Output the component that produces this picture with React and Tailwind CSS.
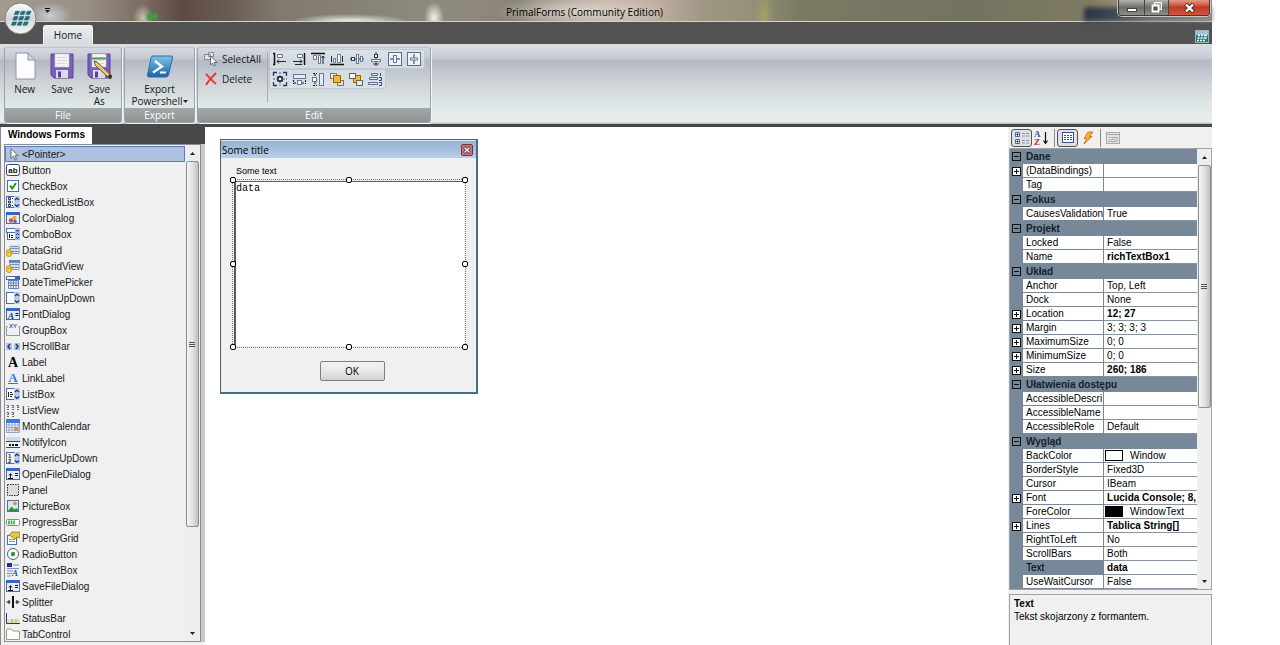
import React from "react";

const BLUE = "#4a6fa5";
const NAVY = "#1f3864";

// small pieces shared by the toolbox icons
const Frame = ({ x = 1, y = 1, w = 12, h = 12, fill = "#fff" }) => (
  <rect x={x + 0.5} y={y + 0.5} width={w - 1} height={h - 1} fill={fill} stroke={BLUE} />
);

const Dialog = ({ children }) => (
  <>
    <Frame x={0} w={14} fill="#e4ecf8" />
    <rect x="0" y="1" width="14" height="3" fill="#3565c8" />
    {children}
  </>
);

const Spin = () => (
  <>
    <rect x="8" y="1" width="6" height="12" fill="#b8cdf0" />
    <path d="M9 5l2-2 2 2M9 9.500l2 2 2-2" fill="none" stroke={NAVY} strokeWidth="1.200" />
  </>
);

const Grid = () => <path d="M4 3.500h9v7h-9zM4 5.500h9M4 8.500h9M7 3v8M10 3v8" fill="#fff" stroke="#7d94b8" />;

const Cylinder = () => (
  <path d="M0.500 8c0-2 5-2 5 0v4c0 2-5 2-5 0zM0.500 8c0 1.500 5 1.500 5 0" fill="#f5c542" stroke="#b8860b" strokeWidth="0.700" />
);

const FileDialog = () => (
  <Dialog>
    <path d="M2 11.500h5M4.500 11V7M3 8.500l1.500-2 1.500 2M9 6.500h3M9 8.500h3" fill="none" stroke="#111" />
  </Dialog>
);

const toolIcons = {
  "<Pointer>": <path d="M5 1.500v10l2.300-2.200 1.700 3.700 1.500-.7-1.600-3.600h3.100z" fill="#fff" stroke="#4d5f80" strokeWidth="0.900" />,
  Button: (
    <>
      <rect x="0.500" y="1.500" width="13" height="11" rx="2" fill="#fff" stroke="#2c4770" />
      <text x="7" y="10" textAnchor="middle" fontSize="8" fontWeight="bold" fill="#111">ab</text>
    </>
  ),
  CheckBox: (
    <>
      <Frame />
      <path d="M4 6.500l2.200 3L10 4" fill="none" stroke="#1d9a1d" strokeWidth="2" />
    </>
  ),
  CheckedListBox: (
    <>
      <Frame x={0} w={14} />
      <path d="M2.500 2.500h2v2h-2zM2.500 6h2v2h-2zM2.500 9.500h2v2h-2zM6 3.500h1M6 7h1M6 10.500h1" fill="none" stroke={NAVY} />
      <Spin />
    </>
  ),
  ColorDialog: (
    <Dialog>
      <circle cx="5" cy="9.500" r="2.200" fill="#e04a3a" />
      <circle cx="8.500" cy="7" r="2.200" fill="#f0a030" />
      <circle cx="9" cy="10.500" r="1.800" fill="#3f6fd8" />
    </Dialog>
  ),
  ComboBox: (
    <>
      <Frame x={0} y={1} w={14} h={5} />
      <Frame x={1} y={5} w={12} h={8} />
      <path d="M3.500 7v4M5 8.500h2M5 10.500h2" stroke="#111" />
      <rect x="9" y="1" width="5" height="12" fill="#9db8e6" />
      <path d="M10 3l1.500 1.500L13 3M10 8l1.500-1.500L13 8M10 10l1.500 1.500L13 10" fill="none" stroke={NAVY} />
    </>
  ),
  DataGrid: (
    <>
      <rect x="4" y="1" width="10" height="10" fill="#dfe7f5" />
      <Grid />
      <Cylinder />
    </>
  ),
  DataGridView: (
    <>
      <rect x="3" y="1" width="11" height="3" fill="#5b83cc" />
      <Grid />
      <Cylinder />
    </>
  ),
  DateTimePicker: (
    <>
      <Frame x={0} w={14} h={4} />
      <rect x="9" y="1" width="5" height="3" fill="#3565c8" />
      <path d="M2.500 5.500h10v8h-10zM2 8h11M2 10.500h11M5 5v9M7.500 5v9M10 5v9" fill="#fff" stroke="#5f7fb8" />
    </>
  ),
  DomainUpDown: (
    <>
      <Frame x={0} w={14} />
      <Spin />
    </>
  ),
  FontDialog: (
    <Dialog>
      <text x="2" y="12" fontSize="9" fontStyle="italic" fontWeight="bold" fill={NAVY} fontFamily="Liberation Serif">A</text>
      <path d="M9.500 6.500h3M9.500 8.500h3" stroke="#111" />
    </Dialog>
  ),
  GroupBox: (
    <>
      <path d="M2 3.500H.5v9h13v-9h-1.500" fill="none" stroke="#8a9bb5" />
      <text x="7" y="5" textAnchor="middle" fontSize="6" fontWeight="bold" fill="#2f62c0">XY</text>
    </>
  ),
  HScrollBar: (
    <>
      <rect x="0" y="4" width="6" height="7" fill="#a9c1ea" />
      <rect x="8" y="4" width="6" height="7" fill="#a9c1ea" />
      <path d="M4 5L2 7.500 4 10M10 5l2 2.500-2 2.500" fill="none" stroke={NAVY} strokeWidth="1.300" />
    </>
  ),
  Label: <text x="7" y="12" textAnchor="middle" fontSize="14" fontWeight="bold" fill="#000" fontFamily="Liberation Serif">A</text>,
  LinkLabel: (
    <>
      <text x="7" y="11" textAnchor="middle" fontSize="13" fontWeight="bold" fill="#3a78d0" fontFamily="Liberation Serif">A</text>
      <path d="M2 12.500h10" stroke="#3a78d0" />
    </>
  ),
  ListBox: (
    <>
      <Frame x={0} w={14} />
      <path d="M2.500 5v5M4 5.500h2M4 7.500h3M4 9.500h2" stroke="#222" />
      <Spin />
    </>
  ),
  ListView: (
    <path
      d="M.5 2.500h2v2h-1.500M5.500 2.500h2v2h-1.500M10.500 2.500h2v2h-1.500M.5 9.500h2v2h-1.500M5.500 9.500h2v2h-1.500M1 6.500h2M6 6.500h2M11 6.500h2M1 13.500h2M6 13.500h2"
      fill="none"
      stroke="#55657e"
    />
  ),
  MonthCalendar: (
    <>
      <path d="M.5 3.500h13v10H.5zM0 6h14M0 8.500h14M0 11h14M3 3v10M6 3v10M9 3v10M12 3v10" fill="#fff" stroke="#8ea6cf" />
      <rect x="0" y="0" width="14" height="4" fill="#3f78d8" />
      <rect x="8" y="8" width="4" height="4" fill="#e2885e" />
    </>
  ),
  NotifyIcon: (
    <>
      <rect x="0" y="2" width="14" height="4" fill="#cfd8ea" />
      <path d="M0 6.500h14M0 12.500h14" stroke="#3a4a68" />
      <path d="M3 10h2M6 10h2M9 10h3" stroke="#111" strokeWidth="2" />
    </>
  ),
  NumericUpDown: (
    <>
      <Frame x={0} w={14} />
      <text x="2" y="7" fontSize="6" fontWeight="bold" fill="#111">1</text>
      <text x="2" y="12" fontSize="6" fontWeight="bold" fill="#111">2</text>
      <Spin />
    </>
  ),
  OpenFileDialog: <FileDialog />,
  Panel: <rect x="1.500" y="1.500" width="11" height="11" fill="#dcdcdc" stroke="#333" strokeDasharray="1.500 1" />,
  PictureBox: (
    <>
      <Frame fill="#d6e6fa" />
      <path d="M1.500 12.500l4-5 3 3 2-1.500 2.500 3.500z" fill="#2f8f3a" />
      <circle cx="9" cy="4.500" r="1.800" fill="#e6833a" />
    </>
  ),
  ProgressBar: (
    <>
      <rect x="0.500" y="4.500" width="13" height="6" rx="1" fill="#fff" stroke="#7f8f7f" />
      <path d="M3 5.500v4M5.500 5.500v4M8 5.500v4" stroke="#2fae3a" strokeWidth="1.600" />
    </>
  ),
  PropertyGrid: (
    <>
      <Frame x={1} y={4} w={10} h={10} />
      <path d="M3 8.500h6M3 10.500h6" stroke="#7d94b8" />
      <path d="M3 4l3-3h8v6l-3-1-2 2-3-2z" fill="#e8c440" stroke="#8a6d1c" strokeWidth="0.700" />
    </>
  ),
  RadioButton: (
    <>
      <circle cx="7" cy="7" r="5.500" fill="#fff" stroke="#44668a" />
      <circle cx="7" cy="7" r="2.200" fill="#2aa02a" />
    </>
  ),
  RichTextBox: (
    <>
      <rect x="1" y="0" width="5" height="4" fill="#1d2fa0" />
      <path d="M7 2h6M1 5.500h12M1 8h6M1 10.500h5M1 13h4" stroke="#7f93b8" />
      <text x="6" y="13" fontSize="9" fontStyle="italic" fontWeight="bold" fill="#1f4fa8" fontFamily="Liberation Serif">A</text>
    </>
  ),
  SaveFileDialog: <FileDialog />,
  Splitter: <path d="M6.500 1v12M7.500 1v12M.5 7h4M3 5v4M13.500 7h-4M11 5v4" stroke="#111" />,
  StatusBar: (
    <>
      <path d="M.5 2v10.500H14" fill="none" stroke="#27348b" />
      <rect x="1" y="8" width="13" height="4" fill="#e6dfc0" />
      <path d="M6 8v4M10 8v4" stroke="#b5a878" />
    </>
  ),
  TabControl: <path d="M.5 12.500v-9l1-1.500h4l1.500 2h6.500v8.500z" fill="#fdfdfa" stroke="#9c9a80" />,
};

const toolItems = Object.keys(toolIcons);

const properties = [
  { category: "Dane" },
  { name: "(DataBindings)", value: "", expand: true },
  { name: "Tag", value: "" },
  { category: "Fokus" },
  { name: "CausesValidation", value: "True" },
  { category: "Projekt" },
  { name: "Locked", value: "False" },
  { name: "Name", value: "richTextBox1", bold: true },
  { category: "Układ" },
  { name: "Anchor", value: "Top, Left" },
  { name: "Dock", value: "None" },
  { name: "Location", value: "12; 27", bold: true, expand: true },
  { name: "Margin", value: "3; 3; 3; 3", expand: true },
  { name: "MaximumSize", value: "0; 0", expand: true },
  { name: "MinimumSize", value: "0; 0", expand: true },
  { name: "Size", value: "260; 186", bold: true, expand: true },
  { category: "Ułatwienia dostępu" },
  { name: "AccessibleDescri", value: "" },
  { name: "AccessibleName", value: "" },
  { name: "AccessibleRole", value: "Default" },
  { category: "Wygląd" },
  { name: "BackColor", value: "Window", swatch: "bg-white" },
  { name: "BorderStyle", value: "Fixed3D" },
  { name: "Cursor", value: "IBeam" },
  { name: "Font", value: "Lucida Console; 8,", bold: true, expand: true },
  { name: "ForeColor", value: "WindowText", swatch: "bg-black" },
  { name: "Lines", value: "Tablica String[]", bold: true, expand: true },
  { name: "RightToLeft", value: "No" },
  { name: "ScrollBars", value: "Both" },
  { name: "Text", value: "data", bold: true, selected: true },
  { name: "UseWaitCursor", value: "False" },
];

// 16x16 drawings of the alignment toolbar
const bar = { fill: "#fff", stroke: "#66789a" };
const alignRow = [
  ["Align lefts", <><path d="M2.500 2v12M1 2.500h2M1 13.500h2" stroke="#111" strokeWidth="1.500" /><path d="M5.500 3.500h5v3h-5z" {...bar} /><path d="M5 10.500h9M7 8.500l-2 2 2 2" fill="none" stroke="#223" /></>],
  ["Align rights", <><path d="M13.500 2v12" stroke="#111" strokeWidth="1.500" /><path d="M6.500 3.500h5v3h-5z" {...bar} /><path d="M2 10.500h9M9 8.500l2 2-2 2M4 13.500h7" fill="none" stroke="#223" /></>],
  ["Align tops", <><path d="M1 2.500h14" stroke="#111" strokeWidth="1.500" /><path d="M3.500 4.500h3v4h-3zM8.500 4.500h2v8h-2z" {...bar} /><path d="M13 13V5M11.500 7L13 5l1.500 2" fill="none" stroke="#223" /></>],
  ["Align bottoms", <><path d="M1 13.500h14" stroke="#111" strokeWidth="1.500" /><path d="M8.500 3.500h3v8h-3zM4.500 7.500h2v4h-2z" {...bar} /><path d="M2.500 5v6M13.500 5v6" stroke="#223" /></>],
  ["Align middles", <><path d="M1 8h14" stroke={NAVY} /><rect x="2.500" y="6.500" width="3" height="3" {...bar} stroke={NAVY} /><rect x="7.500" y="3.500" width="2" height="9" {...bar} /><rect x="11.500" y="5.500" width="2" height="5" {...bar} /></>],
  ["Align centers", <><path d="M8 1v14" stroke={NAVY} /><rect x="6.500" y="3.500" width="3" height="3" {...bar} stroke={NAVY} /><rect x="3.500" y="8.500" width="9" height="2" {...bar} /><path d="M5 13h6" stroke={NAVY} /></>],
  ["Center horizontally", <><rect x="1.500" y="1.500" width="13" height="13" fill="#eef3fb" stroke="#5a6f95" /><path d="M3 8h3M10 8h3" stroke={NAVY} /><rect x="6.500" y="4.500" width="3" height="7" {...bar} /></>],
  ["Center vertically", <><rect x="1.500" y="1.500" width="13" height="13" fill="#eef3fb" stroke="#5a6f95" /><path d="M8 3v4M8 9v4" stroke={NAVY} /><rect x="4.500" y="7" width="7" height="2" {...bar} /></>],
];
const sizeRow = [
  ["Same size", <><path d="M1.500 5V1.500H5M11 1.500h3.500V5M14.500 11v3.500H11M5 14.500H1.500V11" fill="none" stroke={NAVY} strokeWidth="1.300" /><rect x="6" y="6" width="4" height="4" fill="#fff" stroke="#111" strokeWidth="1.500" /><path d="M8 1v4M8 11v4M1 8h4M11 8h4" stroke="#2c5cae" strokeDasharray="2 1" /></>],
  ["Same width", <><rect x="2.500" y="3.500" width="12" height="4" fill="#e2ebf8" stroke="#66789a" /><path d="M2.500 9v4M14.500 9v4M3 12h3M11 12h3" stroke="#111" strokeDasharray="2 1" /><rect x="6.500" y="9.500" width="4" height="4" {...bar} /></>],
  ["Same height", <><rect x="9.500" y="2.500" width="4" height="12" fill="#e2ebf8" stroke="#66789a" /><path d="M3 2.500h4M3 14.500h4M5 3v3M5 11v3" stroke="#111" strokeDasharray="2 1" /><rect x="2.500" y="6.500" width="4" height="4" {...bar} /></>],
  ["Bring to front", <><rect x="1.500" y="2.500" width="6" height="5" fill="#eee" stroke="#777" /><rect x="8.500" y="9.500" width="6" height="5" fill="#ddd" stroke="#777" /><rect x="4.500" y="4.500" width="7" height="7" fill="#f2b92e" stroke="#94690f" /></>],
  ["Send to back", <><rect x="5.500" y="4.500" width="7" height="7" fill="#f2b92e" stroke="#94690f" /><rect x="1.500" y="2.500" width="6" height="5" fill="#f4f4f4" stroke="#666" /><rect x="8.500" y="9.500" width="6" height="5" fill="#e8e8e8" stroke="#666" /></>],
  ["Tab order", <><path d="M4.500 2.500h6v2h-6zM2.500 6.500h8v2h-8zM1.500 11.500h9v2h-9z" fill="#dfe8f6" stroke="#5a6f95" /><path d="M13.500 2v3M12 6.500h2.500v3H12M12 11.500h2.500v3H12" fill="none" stroke="#2c4d88" /></>],
];

// slanted tile rows of the product logo
const LogoTiles = () => (
  <>
    {[0, 1, 2].map((row) =>
      [0, 1, 2].map((col) => (
        <path
          key={`${row}${col}`}
          d={`M${12 + col * 6 - row * 1.5} ${9.5 + row * 5.5}h4l-1.500 3.500h-4z`}
          fill="#1b7280"
          stroke="#145662"
          strokeWidth="0.500"
        />
      ))
    )}
  </>
);

const Floppy = ({ children }) => (
  <svg className="h-7 w-7" viewBox="0 0 28 28" aria-hidden="true">
    <path d="M3 2h22v24H6l-3-3z" fill="#7a5fb8" stroke="#59429a" />
    <rect x="7" y="2" width="14" height="13" fill="#f4f4f2" stroke="#c9c9d4" strokeWidth="0.600" />
    <path d="M9 5.500h10M9 8.500h10M9 11.500h10" stroke="#d8d8d8" />
    <rect x="8" y="18" width="12" height="8" fill="#dcdce6" />
    <rect x="10" y="19.500" width="3" height="6" fill="#59429a" />
    {children}
  </svg>
);

const RibbonButton = ({ icon, children }) => (
  <button className="flex flex-col items-center">
    {icon}
    <span className="mt-[3px] text-[10px] leading-[12px]">{children}</span>
  </button>
);

const RibbonGroup = ({ title, className, children }) => (
  <section
    className={`flex h-[76px] flex-col overflow-hidden rounded-[3px] border border-[#9da2aa] border-t-[#bfc4cc] shadow-[1px_1px_0_#f3f6f6] ${className}`}
  >
    <div className="flex flex-1">{children}</div>
    <h2 className="h-[14px] bg-linear-to-b from-[#a3a7a7] to-[#8e9292] text-center text-[10px] leading-[14px] text-white">
      {title}
    </h2>
  </section>
);

const IconStrip = ({ items, className }) => (
  <div className={`grid h-5 rounded-[2px] border border-[#c2c8d0] bg-[#e0e5ea]/70 ${className}`}>
    {items.map(([label, art]) => (
      <button key={label} aria-label={label} className="flex items-center justify-center">
        <svg className="h-4 w-4" viewBox="0 0 16 16" fill="none">
          {art}
        </svg>
      </button>
    ))}
  </div>
);

const Arrow = ({ down }) => (
  <svg className="h-[3px] w-[5px]" viewBox="0 0 5 3" aria-hidden="true">
    <path d={down ? "M0 0h5L2.500 3z" : "M0 3h5L2.500 0z"} fill="#222" />
  </svg>
);

const ScrollBar = ({ thumb }) => (
  <div className="flex w-[14px] shrink-0 flex-col items-center bg-[#eeeeee]">
    <button aria-label="Scroll up" className="flex h-4 w-full items-center justify-center">
      <Arrow />
    </button>
    <div
      className={`flex w-[13px] flex-col items-center justify-center gap-px rounded-[2px] border border-[#8f8f8f] bg-linear-to-r from-[#f5f5f5] via-[#e2e2e2] to-[#c0c0c0] ${thumb}`}
    >
      <i className="h-px w-[6px] bg-[#555]" />
      <i className="h-px w-[6px] bg-[#555]" />
      <i className="h-px w-[6px] bg-[#555]" />
    </div>
    <div className="flex-1" />
    <button aria-label="Scroll down" className="flex h-4 w-full items-center justify-center">
      <Arrow down />
    </button>
  </div>
);

const TitleBar = () => (
  <header className="relative flex h-[22px] items-start border-b border-[#d6d2c8] bg-[linear-gradient(90deg,#a29c90_0,#989186_7%,#7a6a60_12%,#5c4b45_15%,#6b5d54_19%,#7f7a6c_23%,#8f8b7c_36%,#8a8577_43%,#a39a8e_46%,#c4b3a7_50%,#c0ada1_54%,#9f9784_58%,#959177_62%,#7b7963_66%,#747260_80%,#7f7b62_90%,#b3a67c_95%,#8c8b80_100%)]">
    <div className="absolute inset-0 bg-[radial-gradient(10px_14px_at_143px_18px,#b9c7a8,transparent),radial-gradient(22px_14px_at_50px_16px,#c4ccd6,transparent),radial-gradient(60px_8px_at_350px_22px,#ffffff,transparent),radial-gradient(10px_16px_at_434px_18px,#f4f2ea,transparent),radial-gradient(90px_16px_at_585px_11px,#d9d2c8,transparent),radial-gradient(10px_24px_at_764px_16px,#a5a066,transparent)]" />
    <div className="absolute right-0 bottom-0 h-[14px] w-32 rounded-tl bg-linear-to-r from-[#2b3440] via-[#5a6570] to-[#8b8f8c] blur-[2px]" />
    <div className="absolute bottom-px left-[147px] h-[7px] w-[11px] rounded bg-[#3f9a45] blur-[1px]" />
    <button aria-label="Customize quick access" className="relative ml-[43px] flex h-5 w-2 flex-col items-center justify-center gap-px">
      <i className="h-px w-[5px] bg-black" />
      <Arrow down />
    </button>
    <h1 className="relative flex-1 text-center text-[10px] leading-[25px] text-black">PrimalForms (Community Edition)</h1>
    <div className="relative mr-[2px] flex h-4 w-[92px] overflow-hidden rounded-b-[4px] border border-t-0 border-[#3c3c3c] shadow-[0_0_0_1px_#c9c7bd]">
      <button aria-label="Minimize" className="flex w-[26px] items-center justify-center border-r border-[#444] bg-linear-to-b from-[#b4b4ac] via-[#6e6f6b] to-[#8d8d84]">
        <i className="mt-1 h-[4px] w-[10px] border border-[#444] bg-white" />
      </button>
      <button aria-label="Restore" className="flex w-[24px] items-center justify-center border-r border-[#444] bg-linear-to-b from-[#b4b4ac] via-[#6e6f6b] to-[#8d8d84]">
        <svg className="h-[11px] w-[11px]" viewBox="0 0 11 11">
          <path d="M3.500 .5h7v7h-7z" fill="#aaa" stroke="#fff" />
          <path d="M1.500 3.500h6v6h-6z" fill="#555" stroke="#fff" strokeWidth="1.800" />
        </svg>
      </button>
      <button aria-label="Close" className="flex flex-1 items-center justify-center bg-linear-to-b from-[#e29a88] via-[#c03a22] to-[#d2553c]">
        <svg className="h-[10px] w-[11px]" viewBox="0 0 11 10">
          <path d="M1.500 1l8 8M9.500 1l-8 8" stroke="#5b241b" strokeWidth="4" />
          <path d="M2 1.500l7 7M9 1.500l-7 7" stroke="#fff" strokeWidth="2.400" />
        </svg>
      </button>
    </div>
    <button aria-label="Application menu" className="absolute top-[2px] left-1 z-10 h-[33px] w-[33px]">
      <svg className="h-[33px] w-[33px]" viewBox="0 0 34 34">
        <defs>
          <linearGradient id="orb" x1="0" y1="0" x2="0" y2="1">
            <stop offset="0" stopColor="#ffffff" />
            <stop offset="0.500" stopColor="#d3d5d8" />
            <stop offset="1" stopColor="#f6f7f8" />
          </linearGradient>
        </defs>
        <circle cx="17" cy="17" r="16" fill="url(#orb)" stroke="#77797c" />
        <LogoTiles />
      </svg>
    </button>
  </header>
);

const Ribbon = () => (
  <>
    <nav className="flex h-[22px] items-end justify-between bg-[#525252]">
      <button className="ml-[43px] h-[19px] w-[50px] rounded-t-[3px] border border-b-0 border-[#f2f3f5] bg-linear-to-b from-[#eceef0] to-[#d6d9df] text-[10px] leading-[18px]">
        Home
      </button>
      <button aria-label="About" className="mr-[3px] h-4 w-[14px]">
        <svg className="h-[13px] w-[14px]" viewBox="0 0 14 13">
          <rect x="0.500" y="0.500" width="13" height="12" fill="#2d7485" stroke="#8fb8c0" />
          <rect x="1" y="1" width="12" height="4" fill="#9cc6cf" />
          <path d="M3 5.500h2M6 5.500h2M9 5.500h3M2.500 8h2M5.500 8h2M8.500 8h3M2 10.500h2M5 10.500h2M8 10.500h2" stroke="#fff" strokeWidth="1.500" />
        </svg>
      </button>
    </nav>
    <div className="flex h-[83px] items-start gap-[2px] border-b-[3px] border-[#484848] bg-[linear-gradient(180deg,#dcdee4_0,#c3c8d3_15px,#b2b9c5_16px,#bfc4ce_26px,#ccd2d6_38px,#dfe6e6_60px,#e6efed_78px,#aab0b0_80px)] px-1 pt-[3px]">
      <RibbonGroup title="File" className="w-[118px]">
        <div className="grid flex-1 grid-cols-3 items-start pt-1 pr-[3px] pl-px">
          <RibbonButton
            icon={
              <svg className="h-7 w-7" viewBox="0 0 28 28" aria-hidden="true">
                <path d="M5 1h12l7 7v19H5z" fill="#fdfdfe" stroke="#8a96a8" />
                <path d="M17 1v7h7z" fill="#cfd9e6" stroke="#8a96a8" />
              </svg>
            }
          >
            New
          </RibbonButton>
          <RibbonButton icon={<Floppy />}>Save</RibbonButton>
          <RibbonButton
            icon={
              <Floppy>
                <path d="M7 6.500h14" stroke="#49a84e" strokeWidth="2" />
                <path d="M9 9l3 1 15 14-2 3L10 13z" fill="#e9c878" stroke="#5c4423" strokeWidth="0.900" />
                <path d="M24 22l3 2-1 3-3-2z" fill="#3a2a1a" />
              </Floppy>
            }
          >
            Save
            <br />
            As
          </RibbonButton>
        </div>
      </RibbonGroup>
      <RibbonGroup title="Export" className="w-[71px]">
        <div className="flex-1 pt-1">
          <button className="flex w-full flex-col items-center">
            <svg className="h-7 w-7" viewBox="0 0 28 28" aria-hidden="true">
              <defs>
                <linearGradient id="shell" x1="0" y1="0" x2="0" y2="1">
                  <stop offset="0" stopColor="#7cc4ea" />
                  <stop offset="1" stopColor="#1a62a8" />
                </linearGradient>
              </defs>
              <path d="M7 4h18q2 0 1.500 2l-4 17q-.5 2-2.500 2H3q-2 0-1.500-2L5 6q.5-2 2-2z" fill="url(#shell)" stroke="#2f6da3" />
              <path d="M9 9l7 5.500-9 6" fill="none" stroke="#fff" strokeWidth="2.400" />
              <path d="M14 20.500h6" stroke="#fff" strokeWidth="2.200" />
            </svg>
            <span className="mt-[3px] text-[10px] leading-[12px]">
              Export
              <br />
              <span className="flex items-center">
                Powershell
                <Arrow down />
              </span>
            </span>
          </button>
        </div>
      </RibbonGroup>
      <RibbonGroup title="Edit" className="w-[234px]">
        <div className="flex w-[69px] flex-col items-start pt-px pl-[6px]">
          <button className="flex h-5 items-center gap-1 text-[10px]">
            <svg className="h-[15px] w-[14px]" viewBox="0 0 14 15" aria-hidden="true">
              <path d="M.5 2.500h6v5h-6zM4.500 .5h5v4h-5z" fill="#dfe6ef" stroke="#7c8797" />
              <path d="M6.500 4v9l2-2 1.500 3 1.500-.8-1.500-2.700h3z" fill="#fff" stroke="#59677d" strokeWidth="0.900" />
            </svg>
            SelectAll
          </button>
          <button className="flex h-5 items-center gap-1 text-[10px]">
            <svg className="h-[14px] w-[14px]" viewBox="0 0 14 14" aria-hidden="true">
              <path d="M2 2c3 3 6 7 10 10M12 1C8 5 5 8 2 13" fill="none" stroke="#e5372c" strokeWidth="1.800" />
            </svg>
            Delete
          </button>
        </div>
        <div className="mt-1 mr-px h-[50px] w-px bg-[#a4aab2]" />
        <div className="flex flex-col pt-px">
          <IconStrip items={alignRow} className="w-[156px] grid-cols-8" />
          <IconStrip items={sizeRow} className="w-[117px] grid-cols-6" />
        </div>
      </RibbonGroup>
    </div>
  </>
);

const Toolbox = () => (
  <aside className="flex w-[205px] shrink-0 flex-col border-l border-[#8a8a8a] bg-[#f0f0f0] font-['Liberation_Sans',sans-serif]">
    <div className="flex h-[17px] shrink-0 bg-[#484848]">
      <h2 className="w-[91px] bg-white text-center text-[10px] leading-[15px] font-bold text-black">Windows Forms</h2>
    </div>
    <div className="mb-[3px] flex min-h-0 flex-1 border-r-4 border-[#c9cacd]">
      <div className="ml-[3px] flex flex-1 overflow-hidden border border-[#8c8c94] pr-px">
        <ul className="flex-1 pt-px">
          {toolItems.map((item, i) => (
            <li key={item}>
              <button
                className={`flex h-4 w-full items-center gap-[2px] border text-[10px] ${
                  i === 0 ? "border-[#5b7cc4] bg-[#aec1de]" : "border-transparent"
                }`}
              >
                <svg className="h-[14px] w-[14px] shrink-0" viewBox="0 0 14 14" aria-hidden="true">
                  {toolIcons[item]}
                </svg>
                {item}
              </button>
            </li>
          ))}
        </ul>
        <ScrollBar thumb="h-[366px]" />
      </div>
    </div>
  </aside>
);

const handles = [
  "-top-[3px] -left-[3px]",
  "-top-[3px] left-1/2 -translate-x-1/2",
  "-top-[3px] -right-[3px]",
  "top-1/2 -left-[3px] -translate-y-1/2",
  "top-1/2 -right-[3px] -translate-y-1/2",
  "-bottom-[3px] -left-[3px]",
  "-bottom-[3px] left-1/2 -translate-x-1/2",
  "-bottom-[3px] -right-[3px]",
];

const Designer = () => (
  <main className="flex-1 bg-white pt-3 pl-[15px]">
    <div className="w-[258px] border border-r-2 border-b-2 border-[#45717f] border-t-[#4f5f6e] border-l-[#4f5f6e] bg-[#f0f0f0] pb-[11px] text-black">
      <div className="flex h-[18px] items-center justify-between border-t border-[#dfe9f3] bg-linear-to-b from-[#94b2d0] to-[#b9cfe8] pr-[3px] pl-px">
        <h2 className="text-[10px] leading-[16px]">Some title</h2>
        <button aria-label="Close form" className="flex h-3 w-3 items-center justify-center rounded-[2px] border border-[#7a2f3a] bg-[#c67a80]">
          <svg className="h-2 w-2" viewBox="0 0 8 8">
            <path d="M1 1l6 6M7 1L1 7" stroke="#5b2a33" strokeWidth="3" />
            <path d="M1.500 1.500l5 5M6.500 1.500l-5 5" stroke="#fff" strokeWidth="1.400" />
          </svg>
        </button>
      </div>
      <label htmlFor="rich" className="mt-[6px] block pl-[15px] font-['Liberation_Sans',sans-serif] text-[9px] leading-[14px]">
        Some text
      </label>
      <div className="relative mt-px ml-[11px] h-[169px] w-[234px] border border-dotted border-[#777] p-px">
        <textarea
          id="rich"
          defaultValue="data"
          className="block h-full w-full resize-none border-t border-l-2 border-[#5a5a5a] bg-white font-['Liberation_Mono',monospace] text-[10px] leading-[14px] outline-none"
        />
        {handles.map((pos) => (
          <i key={pos} className={`absolute h-[6px] w-[6px] rounded-[2px] border border-black bg-white ${pos}`} />
        ))}
      </div>
      <div className="mt-[13px] flex justify-center pl-[7px]">
        <button className="h-5 w-[65px] rounded-[2px] border border-[#808080] bg-linear-to-b from-[#f3f3f3] via-[#e8e8e8] to-[#d2d2d2] text-[10px] leading-[18px]">
          OK
        </button>
      </div>
    </div>
  </main>
);

const Expander = ({ open }) => (
  <button aria-label={open ? "Collapse" : "Expand"} className="mx-auto block h-[9px] w-[9px]">
    <svg className="h-[9px] w-[9px]" viewBox="0 0 9 9">
      <rect x="0.500" y="0.500" width="8" height="8" fill={open ? "#778899" : "#fff"} stroke="#111" />
      <path d={open ? "M2 4.500h5" : "M2 4.500h5M4.500 2v5"} stroke="#111" />
    </svg>
  </button>
);

const PropertyRow = ({ row }) => {
  if (row.category) {
    return (
      <tr className="h-[15px] bg-[#778899] text-[#15202b]">
        <td>
          <Expander open />
        </td>
        <th colSpan={2} className="pl-[3px] text-left text-[10px] leading-[15px] font-bold">
          {row.category}
        </th>
      </tr>
    );
  }

  return (
    <tr className="h-[14px] text-[10px] leading-[13px]">
      <td className="bg-[#778899]">{row.expand && <Expander />}</td>
      <th
        scope="row"
        className={`overflow-hidden border-r border-b border-[#778899] pl-[3px] text-left font-normal whitespace-nowrap ${
          row.selected ? "bg-[#778899]" : ""
        }`}
      >
        {row.name}
      </th>
      <td className={`overflow-hidden border-b border-[#8595a5] whitespace-nowrap ${row.swatch ? "pl-px" : "pl-[3px]"} ${row.bold ? "font-bold" : ""}`}>
        {row.swatch ? (
          <span className="flex items-center gap-[7px]">
            <i className={`h-[11px] w-[18px] border border-black ${row.swatch}`} />
            {row.value}
          </span>
        ) : (
          row.value
        )}
      </td>
    </tr>
  );
};

const PropertyPanel = () => (
  <aside className="flex w-[204px] shrink-0 flex-col bg-[#f0f0f0] pl-px font-['Liberation_Sans',sans-serif] text-black">
    <div className="flex h-[21px] shrink-0 items-center pl-[2px]">
      <button aria-label="Categorized" className="flex h-[18px] w-[21px] items-center justify-center rounded-[3px] border border-[#555] bg-[#dfe0e4]">
        <svg className="h-[14px] w-[16px]" viewBox="0 0 16 14">
          <path d="M1.500 1.500h4v4h-4zM1.500 8.500h4v4h-4z" fill="#fff" stroke="#4a6fa5" />
          <path d="M2.500 3.500h2M3.500 2.500v2M2.500 10.500h2M3.500 9.500v2" stroke="#111" />
          <path d="M8 2.500h3M12 2.500h3M8 5h3M12 5h3M8 9.500h3M12 9.500h3M8 12h3M12 12h3" stroke="#8b93a0" />
        </svg>
      </button>
      <button aria-label="Alphabetical" className="ml-[2px] h-4 w-4">
        <svg className="h-4 w-4" viewBox="0 0 16 16">
          <text x="0" y="7" fontSize="9" fontWeight="bold" fill="#3458b0" fontFamily="Liberation Serif">A</text>
          <text x="0" y="15" fontSize="9" fontWeight="bold" fill="#a8323a" fontFamily="Liberation Serif">Z</text>
          <path d="M11.500 2v11M9.500 10.500l2 3 2-3" fill="none" stroke="#111" strokeWidth="1.200" />
        </svg>
      </button>
      <i className="ml-1 h-[18px] w-px bg-[#888]" />
      <button aria-label="Properties" className="ml-[2px] flex h-[18px] w-[21px] items-center justify-center rounded-[3px] border border-[#555] bg-[#dfe0e4]">
        <svg className="h-3 w-3" viewBox="0 0 12 12">
          <rect x="0.500" y="0.500" width="11" height="10" fill="#fff" stroke="#3c4f80" />
          <path d="M2 3.500h2M5 3.500h2M8 3.500h2M2 5.500h2M5 5.500h2M8 5.500h2M2 7.500h2M5 7.500h2M8 7.500h2" stroke="#3d5590" />
        </svg>
      </button>
      <button aria-label="Events" className="ml-[2px] h-4 w-4">
        <svg className="h-4 w-4" viewBox="0 0 16 16">
          <path d="M8 2h5L9.500 6.500H12L4 14l2.500-5.500H4z" fill="#f6b433" stroke="#c9611c" strokeWidth="0.800" />
        </svg>
      </button>
      <i className="ml-1 h-[18px] w-px bg-[#888]" />
      <button aria-label="Property pages" disabled className="ml-[5px] h-[14px] w-[14px]">
        <svg className="h-[14px] w-[14px]" viewBox="0 0 14 14">
          <rect x="0.500" y="1.500" width="13" height="11" fill="#e2e2e2" stroke="#aaa" />
          <path d="M1 3.500h12M3 6.500h2M6 6.500h5v4H3v-2M5 8.500h4" fill="none" stroke="#aaa" />
        </svg>
      </button>
    </div>
    <div className="flex shrink-0 border border-[#a0a4aa]">
      <table className="flex-1 table-fixed border-separate border-spacing-0 bg-white">
        <colgroup>
          <col className="w-[13px]" />
          <col className="w-[81px]" />
          <col />
        </colgroup>
        <tbody>
          {properties.map((row) => (
            <PropertyRow key={row.category || row.name} row={row} />
          ))}
        </tbody>
      </table>
      <ScrollBar thumb="h-[243px]" />
    </div>
    <section className="mt-1 flex-1 border border-b-0 border-[#a0a4aa] px-1 pt-[2px] text-[10px] leading-[13px]">
      <h3 className="font-bold">Text</h3>
      <p>Tekst skojarzony z formantem.</p>
    </section>
  </aside>
);

const App = () => {
  return (
    <div className="h-screen overflow-hidden bg-white pr-[68px] font-['Open_Sans',sans-serif] text-[#15181c]">
      <div className="flex h-full flex-col">
        <TitleBar />
        <Ribbon />
        <div className="flex min-h-0 flex-1">
          <Toolbox />
          <Designer />
          <PropertyPanel />
        </div>
      </div>
    </div>
  );
};

export default App;
